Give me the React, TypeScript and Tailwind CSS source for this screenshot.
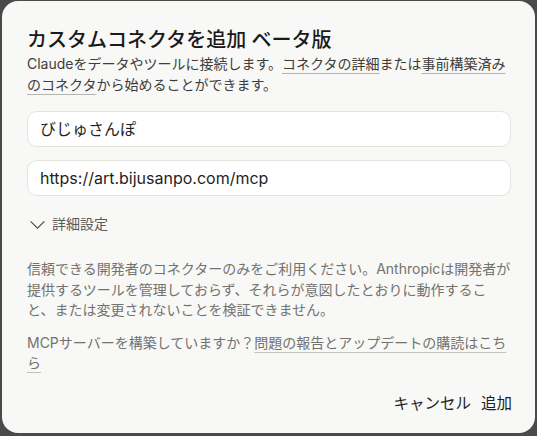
import React from "react";

const font = { fontFamily: 'Inter, "Noto Sans CJK JP", sans-serif' };

export default function App() {
  return (
    <div className="w-[537px] h-[436px] bg-[#4a4a4a] overflow-hidden" style={font}>
      <div className="ml-[2px] mt-[1px] w-[533px] h-[432px] bg-[#f8f8f6] rounded-[16px] pl-[25px] pr-[22px] pt-[26px] flex flex-col">
        <h1 className="text-[20px] leading-[26px] font-medium text-[#1a1a1a]">
          カスタムコネクタを追加 ベータ版
        </h1>
        <p className="text-[14px] leading-[21px] text-[#3d3d3a]">
          Claudeをデータやツールに接続します。
          <span className="underline decoration-[#b5b5b0] underline-offset-[4px]">コネクタの詳細</span>
          または
          <span className="underline decoration-[#b5b5b0] underline-offset-[4px]">事前構築済みのコネクタ</span>
          から始めることができます。
        </p>
        <div className="mt-[16px] mr-[2px] flex flex-col gap-[13px]">
          <div className="h-[36px] bg-white border border-[#e3e3e0] rounded-[10px] flex items-center px-[12px] text-[16px] text-[#1f1f1f]">
            びじゅさんぽ
          </div>
          <div className="h-[36px] bg-white border border-[#e3e3e0] rounded-[10px] flex items-center px-[12px] text-[16px] text-[#1f1f1f]">
            https://art.bijusanpo.com/mcp
          </div>
        </div>
        <div className="mt-[18px] flex items-center gap-[6px] text-[14px] leading-[20px] text-[#5a5a57] pl-[2px]">
          <svg width="17" height="17" viewBox="0 0 16 16" fill="none" stroke="#4a4a48" strokeWidth="1.1">
            <path d="M1.5 5 L8 11.5 L14.5 5" />
          </svg>
          <span>詳細設定</span>
        </div>
        <p className="mt-[25px] text-[14px] leading-[20.5px] text-[#73726e] whitespace-nowrap">
          <span className="block">信頼できる開発者のコネクターのみをご利用ください。Anthropicは開発者が</span>
          <span className="block">提供するツールを管理しておらず、それらが意図したとおりに動作するこ</span>
          <span className="block">と、または変更されないことを検証できません。</span>
        </p>
        <p className="mt-[12px] text-[14px] leading-[20.5px] text-[#73726e]">
          MCPサーバーを構築していますか？
          <span className="underline decoration-[#c2c2bd] underline-offset-[4px]">問題の報告とアップデートの購読はこちら</span>
        </p>
        <div className="mt-auto mb-[11px] flex justify-end items-center gap-[10px] text-[15.5px] text-[#1f1f1f] h-[36px] mr-[1px]">
          <span>キャンセル</span>
          <span>追加</span>
        </div>
      </div>
    </div>
  );
}
